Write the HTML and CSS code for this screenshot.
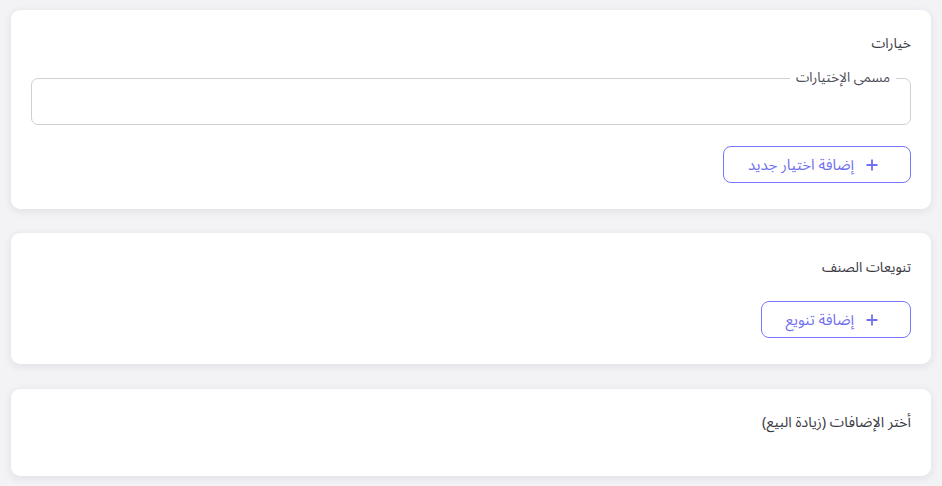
FILE: index.html
```html
<!DOCTYPE html>
<html lang="ar" dir="rtl">
<head>
<meta charset="utf-8">
<link rel="stylesheet" href="styles.css">
</head>
<body>
<div class="page">
  <section class="card card-options">
    <h3 class="card-title">خيارات</h3>
    <fieldset class="field">
      <legend class="field-label">مسمى الإختيارات</legend>
      <input class="field-input" type="text">
    </fieldset>
    <div class="actions">
      <button class="btn-outline">
        <svg class="plus" viewBox="0 0 12 12" width="12" height="12"><path d="M6 0.5v11M0.5 6h11" stroke="currentColor" stroke-width="1.8" fill="none"/></svg>
        <span>إضافة اختيار جديد</span>
      </button>
    </div>
  </section>
  <section class="card card-variants">
    <h3 class="card-title">تنويعات الصنف</h3>
    <div class="actions">
      <button class="btn-outline">
        <svg class="plus" viewBox="0 0 12 12" width="12" height="12"><path d="M6 0.5v11M0.5 6h11" stroke="currentColor" stroke-width="1.8" fill="none"/></svg>
        <span>إضافة تنويع</span>
      </button>
    </div>
  </section>
  <section class="card card-addons">
    <h3 class="card-title title-addons">أختر الإضافات (زيادة البيع)</h3>
  </section>
</div>
</body>
</html>
```
FILE: styles.css
```css
* { box-sizing: border-box; }
html, body { margin: 0; padding: 0; }
body {
  background: #f3f3f6;
  font-family: "Noto Sans Arabic", "Noto Sans", "DejaVu Sans", sans-serif;
  color: #3a3a44;
}
.page {
  padding: 10px 11px;
  display: flex;
  flex-direction: column;
  gap: 24px;
}
.card {
  background: #ffffff;
  border-radius: 9px;
  box-shadow: 0 2px 8px rgba(40, 40, 70, 0.10);
  padding: 24px 20px 26px;
}
.card-title {
  margin: 0;
  font-size: 14px;
  font-weight: 400;
  line-height: 20px;
  color: #3b3b45;
}
.title-addons { font-size: 14.5px; }
.field {
  margin: 17px 0 0;
  padding: 0;
  border: 1px solid #cfcfd6;
  border-radius: 7px;
  height: 54px;
}
.field-label {
  margin-right: 14px;
  padding: 0 6px;
  font-size: 13.5px;
  line-height: 14px;
  color: #4c4c58;
}
.field-input {
  border: none;
  outline: none;
  background: transparent;
  width: 100%;
  height: 36px;
}
.actions {
  display: flex;
  justify-content: flex-start;
  margin-top: 21px;
}
.card-options { padding-bottom: 26px; }
.card-variants { padding-top: 25px; padding-bottom: 26px; }
.card-variants .actions { margin-top: 23px; }
.card-addons { margin-top: 1px; padding-bottom: 43px; }
.btn-outline {
  display: flex;
  align-items: center;
  gap: 12px;
  height: 37px;
  padding: 0 32px 0 24px;
  border: 1px solid #7777fb;
  border-radius: 8px;
  background: #ffffff;
  color: #7070f0;
  font-family: inherit;
  font-size: 15px;
  white-space: nowrap;
}
.plus { flex: none; }
```
